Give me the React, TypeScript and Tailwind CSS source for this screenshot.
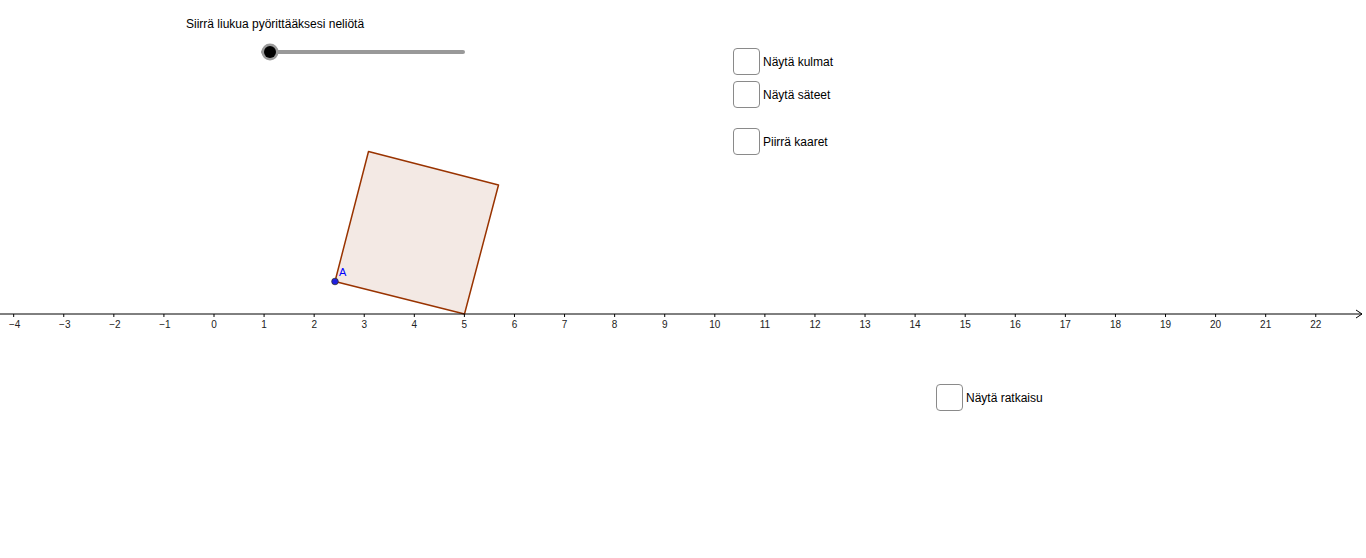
const UNIT = 50.08;
const ORIGIN_X = 214;
const AXIS_Y = 314;

const TICKS = Array.from({ length: 27 }, (_, i) => i - 4);

const CHECKBOXES = [
  { label: "Näytä kulmat", left: 733, top: 48 },
  { label: "Näytä säteet", left: 733, top: 81 },
  { label: "Piirrä kaaret", left: 733, top: 128 },
  { label: "Näytä ratkaisu", left: 936, top: 384 },
];

function Checkbox({ label, left, top }: { label: string; left: number; top: number }) {
  return (
    <label
      className="absolute flex items-center gap-[3px] text-[12px] text-black"
      style={{ left, top }}
    >
      <span className="block h-[27px] w-[27px] rounded-[4px] border border-[#8a8a8a] bg-white" />
      <span className="pt-[1px]">{label}</span>
    </label>
  );
}

function Graphics() {
  const tx = (v: number) => ORIGIN_X + v * UNIT;
  return (
    <svg width="1366" height="558" className="absolute left-0 top-0">
      {/* slider */}
      <line x1="263" y1="52" x2="463" y2="52" stroke="#999" strokeWidth="4" strokeLinecap="round" />
      <circle cx="270" cy="52" r="8.5" fill="#9a9a9a" />
      <circle cx="270" cy="52" r="6" fill="#000" />

      {/* square */}
      <polygon
        points="335,281.5 368.5,151.5 498.5,185 464.5,314"
        fill="#f3e9e4"
        stroke="#993300"
        strokeWidth="1.5"
        strokeLinejoin="round"
      />

      {/* x axis */}
      <line x1="0" y1={AXIS_Y} x2="1362" y2={AXIS_Y} stroke="#000" strokeWidth="1" />
      <path d="M1356 310 L1362 314 L1356 318" fill="none" stroke="#000" strokeWidth="1" />
      {TICKS.map((v) => (
        <g key={v}>
          <line x1={tx(v)} y1={AXIS_Y} x2={tx(v)} y2={AXIS_Y + 3} stroke="#000" strokeWidth="1" />
          <text
            x={tx(v) + (v < 0 ? 1 : 0)}
            y={328}
            textAnchor="middle"
            fontSize="10"
            fontFamily="'Liberation Sans', Arial, sans-serif"
            fill="#222"
          >
            {v < 0 ? `\u2212${-v}` : v}
          </text>
        </g>
      ))}

      {/* point A */}
      <circle cx="335" cy="281.5" r="3.3" fill="#1f1fe0" stroke="#333" strokeWidth="0.8" />
      <text x="339" y="275.5" fontSize="11" fontFamily="'Liberation Sans', Arial, sans-serif" fill="#0000ff">
        A
      </text>
    </svg>
  );
}

export default function App() {
  return (
    <div className="relative h-[558px] w-[1366px] overflow-hidden bg-white font-['Liberation_Sans',Arial,sans-serif]">
      <Graphics />
      <p className="absolute left-[186px] top-[15px] text-[12px] text-black">
        Siirrä liukua pyörittääksesi neliötä
      </p>
      {CHECKBOXES.map((c) => (
        <Checkbox key={c.label} {...c} />
      ))}
    </div>
  );
}
